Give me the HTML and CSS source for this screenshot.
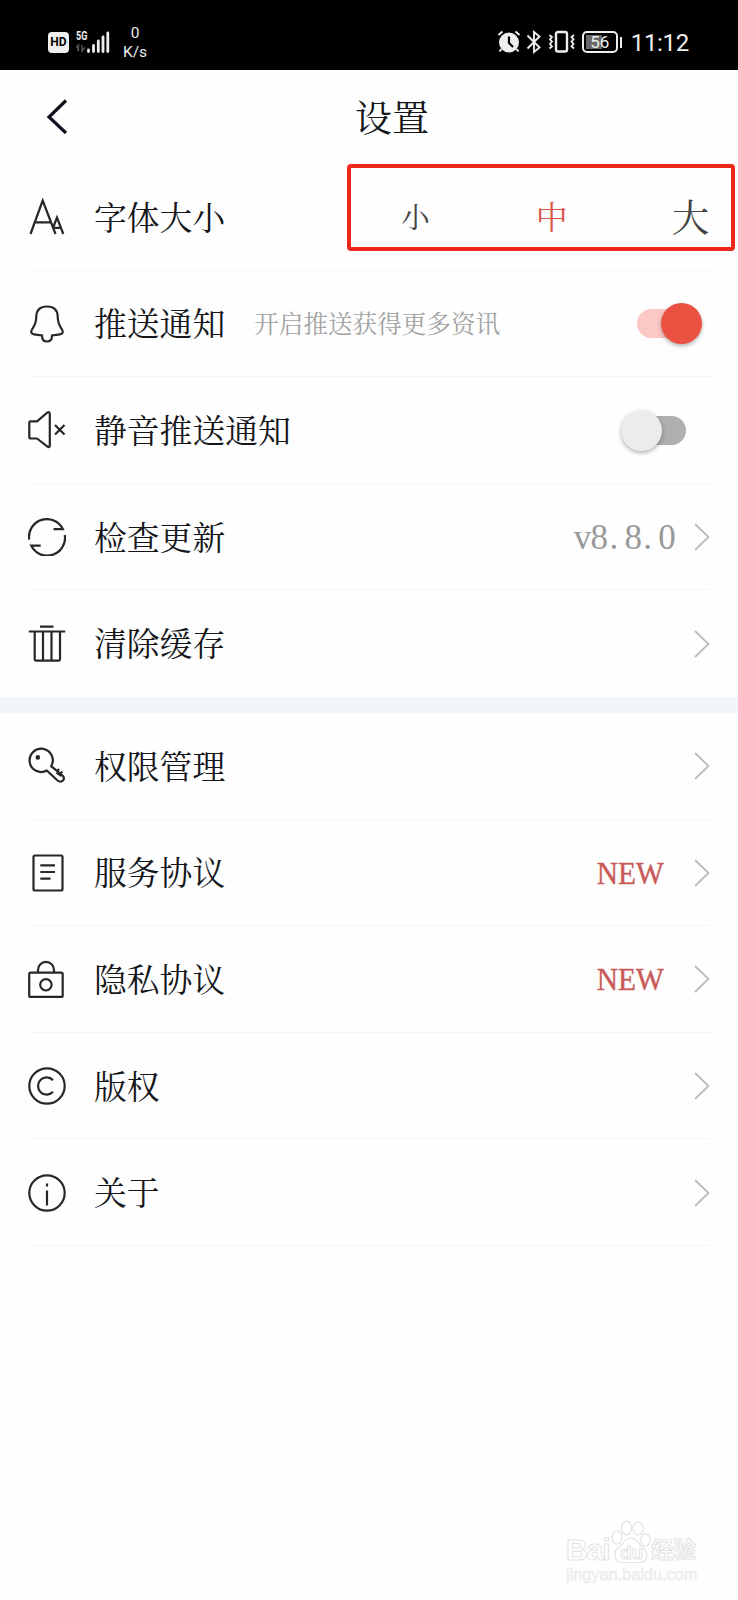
FILE: index.html
```html
<!DOCTYPE html>
<html lang="zh-CN">
<head>
<meta charset="utf-8">
<title>设置</title>
<link rel="stylesheet" href="styles.css">
</head>
<body>
<div class="statusbar">
  <div class="status-left">
    <span class="hd">HD</span>
    <div class="signal">
      <span class="net">5G</span>
      <svg width="34" height="22" viewBox="0 0 34 22"><path d="M2 15v5M0 16.500L2.500 14v6M6 20v-6M6 14v6l3-3.500" fill="none" stroke="#555" stroke-width="1.500"/><path d="M12.500 20.500v-1.500M17.500 20.500v-6M22.300 20.500V10M27 20.500V6M31.800 20.500V2" stroke="#eee" stroke-width="2.800" stroke-linecap="round" fill="none"/></svg>
    </div>
    <div class="speed"><span>0</span><span>K/s</span></div>
  </div>
  <div class="status-right">
    <svg class="alarm" width="24" height="24" viewBox="0 0 24 24"><circle cx="12" cy="12.500" r="10" fill="#eee"/><path d="M1.500 5l4-3.500M22.500 5l-4-3.500M4.500 19L2.500 21.500M19.500 19l2 2.500" stroke="#eee" stroke-width="2"/><path d="M12 6.500v6.500l4 4" stroke="#000" stroke-width="2.200" fill="none"/></svg>
    <svg class="bt" width="16" height="24" viewBox="0 0 16 24"><path d="M1.500 5.500l12 12L8 22V2l5.500 4.500-12 12" fill="none" stroke="#eee" stroke-width="1.900"/></svg>
    <svg class="vib" width="28" height="24" viewBox="0 0 28 24"><rect x="8" y="2" width="11" height="19.500" rx="2" fill="none" stroke="#eee" stroke-width="2.400"/><path d="M1.500 5l2.500 2-2 2.300 2 2.300-2 2.400 2 2.300-2.500 2.200M26 5l-2.500 2 2 2.300-2 2.300 2 2.400-2 2.300 2.500 2.200" fill="none" stroke="#eee" stroke-width="1.800"/></svg>
    <div class="battery"><span>56</span></div>
    <i class="nub"></i>
    <span class="time">11:12</span>
  </div>
</div>
<header class="header">
  <svg class="back" width="24" height="36" viewBox="0 0 24 36"><path d="M20 1.500L3 18l17 16" fill="none" stroke="#10131f" stroke-width="3.200"/></svg>
  <h1 class="title">设置</h1>
</header>
<main>
  <section>
    <div class="row row-size">
      <svg class="icon" viewBox="0 0 38 38"><path d="M2.500 36L14.700 2.500 27.500 36M7 24.300h16M25 30l4-10.500L35.300 36M26 29.800h6.500"/></svg>
      <span class="label">字体大小</span>
      <div class="sizes"><span class="small">小</span><span class="medium">中</span><span class="large">大</span></div>
      <div class="highlight"></div>
    </div>
    <div class="row">
      <svg class="icon" viewBox="0 0 38 38"><path d="M19 1.500C12 1.500 8.500 5.500 8.300 11.500 8.200 19 6 21.500 4 24.500 2.500 27 3 29 6 29.300L14 30.500C14 34.500 16 36.500 19 36.500S24 34.500 24 30.500L32 29.300C35 29 35.500 27 34 24.500 32 21.500 29.800 19 29.700 11.500 29.500 5.500 26 1.500 19 1.500Z"/></svg>
      <span class="label">推送通知</span>
      <span class="hint">开启推送获得更多资讯</span>
      <div class="switch on"><i></i></div>
    </div>
    <div class="row">
      <svg class="icon" viewBox="0 0 38 38"><path d="M2.500 10.300H9L19.500 1.500Q21.800.5 21.800 3V34.500Q21.800 37 19.500 35.500L9 27.500H3Q1.300 27.500 1.300 26V11.500Q1.300 10.300 2.500 10.300ZM27 14l9.500 9.500M36.500 14L27 23.500"/></svg>
      <span class="label">静音推送通知</span>
      <div class="switch off"><i></i></div>
    </div>
    <div class="row">
      <svg class="icon" viewBox="0 0 38 38"><path d="M1.200 21.500A17.800 17.800 0 0 1 34.800 11.100H25.500M36.800 17A17.800 17.800 0 0 1 3.200 27.600H12.700"/></svg>
      <span class="label">检查更新</span>
      <span class="version">v8<b>.</b>8<b>.</b>0</span>
      <svg class="chev" viewBox="0 0 16 28"><path d="M1 1l13.500 13L1 27"/></svg>
    </div>
    <div class="row last">
      <svg class="icon" viewBox="0 0 38 38"><path d="M12 1.700H25.500M.8 6.500H37.200M6.700 6.500V34Q6.700 35.700 8.200 35.700H30.500Q32 35.700 32 34V6.500M15 6.500V35.700M23.500 6.500V35.700"/></svg>
      <span class="label">清除缓存</span>
      <svg class="chev end" viewBox="0 0 16 28"><path d="M1 1l13.500 13L1 27"/></svg>
    </div>
  </section>
  <section class="group">
    <div class="row">
      <svg class="icon" viewBox="0 0 38 38"><path d="M18.800 23.500L29.500 33.500Q32.500 35.800 35 33.500 37 31 34.500 28.500L23.200 19.200A11.600 11.600 0 1 0 18.800 23.500ZM29 24.500l2-2.500M32 27l2.300-2.500M28.500 25.500l5 3.500"/><circle cx="9.800" cy="10.400" r="1.200" fill="#26272b"/></svg>
      <span class="label">权限管理</span>
      <svg class="chev end" viewBox="0 0 16 28"><path d="M1 1l13.500 13L1 27"/></svg>
    </div>
    <div class="row">
      <svg class="icon" viewBox="0 0 38 38"><rect x="5.500" y="1.500" width="29" height="35" rx="1.500"/><path d="M12.300 11.300H27M12.300 18H27M12.300 24.700H22.500"/></svg>
      <span class="label">服务协议</span>
      <span class="new">NEW</span>
      <svg class="chev" viewBox="0 0 16 28"><path d="M1 1l13.500 13L1 27"/></svg>
    </div>
    <div class="row">
      <svg class="icon" viewBox="0 0 38 38"><rect x="1.200" y="12.700" width="33.500" height="24.200" rx="1.500"/><path d="M10 12.500V9.900a8 8 0 0 1 16 0V12.500"/><circle cx="17.900" cy="24.800" r="5.700"/></svg>
      <span class="label">隐私协议</span>
      <span class="new">NEW</span>
      <svg class="chev" viewBox="0 0 16 28"><path d="M1 1l13.500 13L1 27"/></svg>
    </div>
    <div class="row">
      <svg class="icon" viewBox="0 0 38 38"><circle cx="19" cy="19" r="17.700"/><path d="M25 13.200A8.600 8.600 0 1 0 25 24.800"/></svg>
      <span class="label">版权</span>
      <svg class="chev end" viewBox="0 0 16 28"><path d="M1 1l13.500 13L1 27"/></svg>
    </div>
    <div class="row">
      <svg class="icon" viewBox="0 0 38 38"><circle cx="19" cy="19" r="17.700"/><path d="M19 9.500V12.500M19 16.500V31.500"/></svg>
      <span class="label">关于</span>
      <svg class="chev end" viewBox="0 0 16 28"><path d="M1 1l13.500 13L1 27"/></svg>
    </div>
  </section>
</main>
<div class="watermark">
  <div class="brand">
    <span class="bai">Bai</span>
    <span class="paw"><svg width="40" height="44" viewBox="0 0 40 44"><g fill="#fff" stroke="#e2e2e2" stroke-width="1.200"><ellipse cx="6" cy="17.500" rx="5" ry="6.500"/><ellipse cx="15.500" cy="8" rx="5" ry="6.800"/><ellipse cx="27" cy="8.500" rx="5" ry="6.500"/><ellipse cx="34.500" cy="20" rx="4.800" ry="6"/><path d="M20 18C15 18 12 24 7 28 1 33 4 42 11 42.500H28C37 43 38 33 32 28 27 24 26 18 20 18Z"/></g></svg><em>du</em></span>
    <span class="jy">经验</span>
  </div>
  <span class="url">jingyan.baidu.com</span>
</div>
</body>
</html>
```
FILE: styles.css
```css
* { box-sizing: border-box; }
body {
  position: relative;
  margin: 0;
  width: 738px;
  height: 1600px;
  overflow: hidden;
  background: #fefefe;
  color: #15161a;
  font-family: "Noto Serif CJK SC", "Noto Serif SC", "Source Han Serif SC", "Noto Sans CJK SC", serif;
}
svg { display: block; flex: none; }

.statusbar {
  display: flex;
  justify-content: space-between;
  height: 70px;
  padding: 0 48px;
  background: #000;
  color: #eee;
  font-family: Roboto, sans-serif;
}
.status-left, .status-right { display: flex; align-items: flex-start; }
.hd {
  width: 21px;
  height: 21px;
  margin-top: 32px;
  border-radius: 4px;
  background: #eee;
  color: #000;
  font-size: 12px;
  font-weight: 700;
  line-height: 21px;
  text-align: center;
}
.signal { position: relative; margin: 31px 0 0 7px; }
.net {
  position: absolute;
  left: 0;
  top: 0;
  font-size: 12.500px;
  font-weight: 700;
  line-height: 10px;
  transform: scaleX(.72);
  transform-origin: left;
}
.speed {
  display: flex;
  flex-direction: column;
  align-items: center;
  margin: 24px 0 0 13px;
  font-size: 15.500px;
  line-height: 18.500px;
}
.alarm { margin: 30px -1px 0 0; }
.bt { margin: 30px 0 0 6px; }
.vib { margin: 30px 0 0 6px; }
.battery {
  width: 36px;
  height: 22px;
  margin: 31px 0 0 6px;
  padding: 2px;
  border: 2px solid #eee;
  border-radius: 5px;
}
.battery span {
  display: block;
  height: 14px;
  background: linear-gradient(90deg, #666 56%, transparent 56%);
  font-size: 17px;
  line-height: 15px;
  text-align: center;
}
.nub { width: 2px; height: 11px; margin: 37px 0 0 2px; background: #eee; }
.time { margin: 28px 1px 0 9px; font-size: 24px; line-height: 30px; letter-spacing: -.3px; }

.header {
  position: relative;
  display: flex;
  align-items: center;
  justify-content: center;
  height: 94px;
}
.back { position: absolute; left: 46px; top: 29px; }
.title { margin: 0 0 3px 46px; font-size: 37px; font-weight: 400; line-height: 40px; }

.row {
  position: relative;
  display: flex;
  align-items: center;
  height: 106.600px;
  padding: 0 28px;
}
.row::after {
  content: "";
  position: absolute;
  left: 30px;
  right: 28px;
  bottom: 0;
  height: 1px;
  background: #f4f4f4;
}
.last::after { display: none; }
.group { border-top: 16px solid #f3f6f9; }
.icon { width: 38px; height: 38px; fill: none; stroke: #26272b; stroke-width: 2.200; }
.label { margin-left: 28px; padding-bottom: 3px; font-size: 32.800px; line-height: 44px; white-space: nowrap; }
.hint { margin-left: 29px; padding-bottom: 2px; font-size: 24.600px; color: #a2a2a2; white-space: nowrap; }
.chev { width: 16px; height: 28px; margin-left: 18px; fill: none; stroke: #bcbcbc; stroke-width: 1.800; }
.end { margin-left: auto; }

.sizes { display: flex; flex: 1; align-items: center; margin-left: 176px; padding-bottom: 4px; color: #444; }
.small { font-size: 28.500px; }
.medium { margin-left: 106px; font-size: 32px; color: #d9564a; }
.large { margin-left: 104px; font-size: 37.500px; }
.highlight {
  position: absolute;
  left: 347px;
  top: 0;
  width: 388px;
  height: 87px;
  border: 4px solid #ee271c;
  border-radius: 4px;
}

.switch { position: relative; width: 56px; height: 29px; margin-left: auto; border-radius: 15px; }
.switch i {
  position: absolute;
  top: -6px;
  width: 41px;
  height: 41px;
  border-radius: 50%;
  box-shadow: 0 2px 4px rgba(0, 0, 0, .3);
}
.on { margin-right: 17px; background: #fbc8c6; }
.on i { right: -9px; background: #eb5140; }
.off { margin-right: 24px; background: #afafaf; }
.off i { left: -9px; background: #ececec; }

.version {
  margin-left: auto;
  margin-right: 1px;
  padding-top: 2px;
  color: #999;
  font-family: "Liberation Serif", serif;
  font-size: 35px;
  letter-spacing: -.700px;
}
.version b { display: inline-block; width: 17px; padding-left: 2px; font-weight: 400; }
.new {
  margin-left: auto;
  margin-right: 12px;
  padding-top: 1px;
  color: #c95a58;
  font-family: "Liberation Serif", serif;
  font-size: 32px;
  transform: scaleX(.92);
  transform-origin: right;
  -webkit-text-stroke: .4px #c95a58;
}

.watermark {
  position: absolute;
  left: 566px;
  top: 1520px;
  color: #fff;
  font-family: "Liberation Sans", "Noto Sans CJK SC", sans-serif;
  -webkit-text-stroke: 1px #e4e4e4;
}
.brand { display: flex; align-items: flex-end; height: 44px; }
.bai { width: 45px; font-size: 30px; font-weight: 700; line-height: 28px; letter-spacing: -1px; }
.paw { position: relative; width: 40px; }
.paw em {
  position: absolute;
  left: 9px;
  bottom: 2px;
  font-size: 19px;
  font-style: normal;
  font-weight: 700;
  line-height: 19px;
}
.jy { font-size: 22.500px; font-weight: 700; line-height: 26px; }
.url { display: block; margin-top: 1px; font-size: 16.300px; line-height: 18px; color: #f3f3f3; -webkit-text-stroke: .4px #e6e6e6; }
```
